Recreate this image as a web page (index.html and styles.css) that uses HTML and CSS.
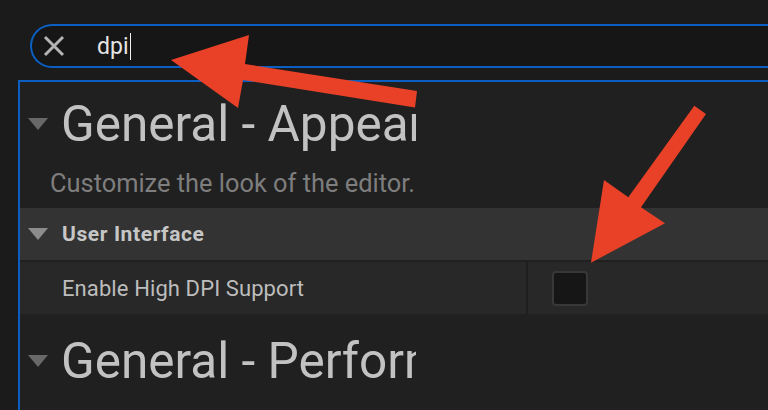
FILE: index.html
```html
<!DOCTYPE html>
<html>
<head>
<meta charset="utf-8">
<link rel="stylesheet" href="styles.css">
</head>
<body>
<div class="page">
  <div class="search">
    <svg class="clear-icon" width="22" height="22" viewBox="0 0 22 22"><path d="M2 2 L20 20 M20 2 L2 20" stroke="#b4b4b4" stroke-width="3" fill="none"/></svg>
    <span class="search-text">dpi</span><span class="caret"></span>
  </div>
  <div class="panel">
    <div class="section-head">
      <span class="tri tri-dim"></span>
      <span class="section-title">General - Appearance</span>
    </div>
    <div class="section-desc">Customize the look of the editor.</div>
    <div class="category">
      <span class="tri tri-light"></span>
      <span class="category-title">User Interface</span>
    </div>
    <div class="prop-row">
      <div class="prop-name">Enable High DPI Support</div>
      <div class="prop-split"></div>
      <div class="prop-value"><span class="checkbox"></span></div>
    </div>
    <div class="section-head section-head-2">
      <span class="tri tri-dim"></span>
      <span class="section-title">General - Performance</span>
    </div>
  </div>
</div>
<svg class="arrows" width="768" height="410" viewBox="0 0 768 410">
  <polygon fill="#e84128" points="171,60 249,35 245,64 417,91 415,107.5 243,80 238,108"/>
  <polygon fill="#e84128" points="694.3,105.7 706,114 641,207.3 665,223.3 591,262.7 604,180 628.3,197.3"/>
</svg>
</body>
</html>
```
FILE: styles.css
```css
html, body {
  margin: 0;
  padding: 0;
  width: 768px;
  height: 410px;
  overflow: hidden;
  background: #1b1b1b;
  font-family: Roboto, "Liberation Sans", sans-serif;
}
body { position: relative; }
.page {
  display: flex;
  flex-direction: column;
  height: 410px;
  padding-top: 24px;
  box-sizing: border-box;
}
.search {
  margin-left: 30px;
  margin-right: -20px;
  height: 44px;
  box-sizing: border-box;
  border: 2px solid #0b5fc3;
  border-right: none;
  border-radius: 22px 0 0 22px;
  background: #161616;
  display: flex;
  align-items: center;
  padding-left: 11px;
  flex: none;
}
.clear-icon { flex: none; display: block; }
.search-text {
  margin-left: 32px;
  font-size: 23px;
  color: #e4e4e4;
}
.caret {
  display: inline-block;
  width: 0;
  height: 27px;
  border-left: 1.5px solid #f0f0f0;
  margin-left: 2px;
}
.panel {
  margin-top: 12px;
  margin-left: 18px;
  border-top: 2px solid #0b5fc3;
  border-left: 2px solid #0b5fc3;
  background: #202020;
  flex: 1;
  padding-top: 14px;
}
.section-head {
  display: flex;
  align-items: center;
  width: 396px;
  height: 56px;
  overflow: hidden;
  white-space: nowrap;
}
.section-head-2 { margin-top: 19px; }
.tri {
  flex: none;
  width: 0;
  height: 0;
  margin-left: 8px;
  margin-right: 13px;
  border-left: 10px solid transparent;
  border-right: 10px solid transparent;
  border-top: 12px solid #686868;
}
.tri-light { border-top-color: #8c8c8c; }
.section-title {
  font-size: 49.5px;
  line-height: 56px;
  color: #c2c2c2;
}
.section-desc {
  margin-top: 16px;
  padding-left: 30px;
  font-size: 25.4px;
  line-height: 30px;
  color: #7e7e7e;
}
.category {
  margin-top: 10px;
  height: 52px;
  background: #333333;
  display: flex;
  align-items: center;
}
.category .tri { margin-right: 14px; }
.category-title {
  font-size: 21px;
  font-weight: bold;
  letter-spacing: 0.6px;
  color: #c6c6c6;
}
.prop-row {
  margin-top: 2px;
  height: 52px;
  background: #282828;
  display: grid;
  grid-template-columns: 506px 2px 1fr;
}
.prop-name {
  display: flex;
  align-items: center;
  padding-left: 42px;
  font-size: 22px;
  letter-spacing: 0.1px;
  color: #bdbdbd;
}
.prop-split { background: #1e1e1e; }
.prop-value {
  display: flex;
  align-items: center;
  padding-left: 24px;
}
.checkbox {
  width: 36px;
  height: 35px;
  box-sizing: border-box;
  border: 2px solid #383838;
  border-radius: 4px;
  background: #161616;
}
.arrows {
  position: absolute;
  left: 0;
  top: 0;
}
```
